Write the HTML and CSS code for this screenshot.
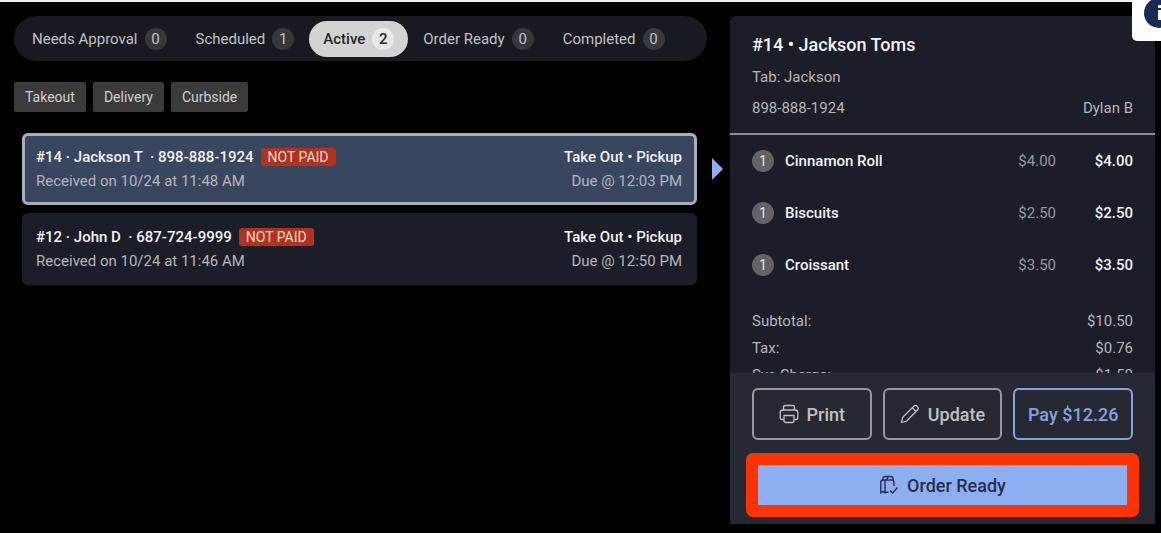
FILE: index.html
```html
<!DOCTYPE html>
<html lang="en">
<head>
    <meta charset="UTF-8" />
    <meta name="viewport" content="width=device-width, initial-scale=1.0" />
    <title>Orders</title>
    <link rel="stylesheet" href="styles.css">
</head>
<body>

    <div class="app">
        <main class="orders">
            <nav class="tabs">
                <button class="tab">Needs Approval <span class="count">0</span></button>
                <button class="tab">Scheduled <span class="count">1</span></button>
                <button class="tab active">Active <span class="count">2</span></button>
                <button class="tab">Order Ready <span class="count">0</span></button>
                <button class="tab">Completed <span class="count">0</span></button>
            </nav>

            <div class="filters">
                <button class="filter">Takeout</button>
                <button class="filter">Delivery</button>
                <button class="filter">Curbside</button>
            </div>

            <div class="order-list">
                <article class="order selected">
                    <div class="order-row">
                        <strong>#14 · Jackson T &nbsp;· 898-888-1924</strong>
                        <span class="badge">NOT PAID</span>
                        <strong class="right">Take Out • Pickup</strong>
                    </div>
                    <div class="order-row">
                        <span>Received on 10/24 at 11:48 AM</span>
                        <span class="right">Due @ 12:03 PM</span>
                    </div>
                </article>
                <article class="order">
                    <div class="order-row">
                        <strong>#12 · John D &nbsp;· 687-724-9999</strong>
                        <span class="badge">NOT PAID</span>
                        <strong class="right">Take Out • Pickup</strong>
                    </div>
                    <div class="order-row">
                        <span>Received on 10/24 at 11:46 AM</span>
                        <span class="right">Due @ 12:50 PM</span>
                    </div>
                </article>
            </div>
        </main>

        <aside class="details">
            <header class="details-header">
                <h1>#14 • Jackson Toms</h1>
                <p>Tab: Jackson</p>
                <p class="split"><span>898-888-1924</span><span>Dylan B</span></p>
            </header>

            <div class="details-body">
                <table class="items">
                    <tr>
                        <td class="qty"><span>1</span></td>
                        <td class="name">Cinnamon Roll</td>
                        <td class="price">$4.00</td>
                        <td class="total">$4.00</td>
                    </tr>
                    <tr>
                        <td class="qty"><span>1</span></td>
                        <td class="name">Biscuits</td>
                        <td class="price">$2.50</td>
                        <td class="total">$2.50</td>
                    </tr>
                    <tr>
                        <td class="qty"><span>1</span></td>
                        <td class="name">Croissant</td>
                        <td class="price">$3.50</td>
                        <td class="total">$3.50</td>
                    </tr>
                </table>
                <div class="summary">
                    <p class="split"><span>Subtotal:</span><span>$10.50</span></p>
                    <p class="split"><span>Tax:</span><span>$0.76</span></p>
                    <p class="split"><span>Svc Charge:</span><span>$1.50</span></p>
                </div>
            </div>

            <footer class="details-footer">
                <div class="actions">
                    <button class="action">
                        <svg width="20" height="20" viewBox="0 0 20 20" fill="none" stroke="currentColor" stroke-width="1.3" stroke-linejoin="round">
                            <path d="M4.500 6V3.200Q4.500 1.500 6.200 1.500h7.600q1.700 0 1.700 1.700V6" />
                            <path d="M4.500 15.500H3Q1.200 15.500 1.200 13.500V8.500Q1.200 6 3.700 6h12.600q2.500 0 2.500 2.500v5q0 2-1.800 2h-1.500" />
                            <path d="M5 11.500h10v5q0 2-2 2H7q-2 0-2-2z" />
                        </svg>
                        Print
                    </button>
                    <button class="action">
                        <svg width="20" height="20" viewBox="0 0 20 20" fill="none" stroke="currentColor" stroke-width="1.3" stroke-linejoin="round">
                            <path d="M1.500 18.500l1.300-5.300L13.900 2.100q1.900-1.300 3.400.300t.400 3.400L6.700 17z" />
                            <path d="M12.300 3.700l4 4" />
                        </svg>
                        Update
                    </button>
                    <button class="action pay">Pay $12.26</button>
                </div>
                <div class="highlight">
                    <button class="ready">
                        <svg width="20" height="20" viewBox="0 0 20 20" fill="none" stroke="currentColor" stroke-width="1.4" stroke-linejoin="round">
                            <path d="M6 5v13l-2-1.500L1.800 18V7.500Q2 5 4 5h9q2 .2 2 2.500V11" />
                            <path d="M4 5V3.500q0-2 2.200-2H12q2 0 2 2V5M8.300 5V3.500q0-1.800 1.700-2" />
                            <path d="M6 17.300h3.500M11 15.500l2.500 2.500 5-5.500" />
                        </svg>
                        Order Ready
                    </button>
                </div>
            </footer>
        </aside>
    </div>

    <button class="info" aria-label="Info">
        <svg width="30" height="28" viewBox="0 2 30 28">
            <circle cx="15" cy="15" r="15" fill="#172b55" />
            <path d="M14 7h4v3h-4zM14 12h4v10h-4z" fill="#fff" />
        </svg>
    </button>

</body>
</html>
```
FILE: styles.css
```css
* {
    box-sizing: border-box;
}

body {
    font-family: Roboto, Arial, sans-serif;
    font-size: 15px;
    line-height: 24px;
    background: #000;
    color: #b4b5ba;
    margin: 0;
    overflow: hidden;
}

button {
    font-family: inherit;
    border: none;
    cursor: pointer;
}

h1, p {
    margin: 0;
}

.app {
    display: grid;
    grid-template-columns: 1fr 425px;
    gap: 23px;
    height: 100vh;
    padding: 14px 6px 9px 14px;
    border-top: 2px solid #eef0f0;
}

.tabs {
    display: flex;
    align-items: center;
    gap: 1px;
    height: 45px;
    padding: 0 4px;
    border-radius: 23px;
    background: #181a21;
}

.tab {
    display: flex;
    align-items: center;
    gap: 7px;
    height: 36px;
    padding: 0 14px;
    border-radius: 18px;
    background: none;
    color: #c1c2c4;
    font-size: 15px;
    white-space: nowrap;
}

.count {
    width: 22px;
    border-radius: 50%;
    background: #36383b;
    line-height: 22px;
    text-align: center;
}

.tab.active {
    background: #d2d4d3;
    color: #25272b;
    font-weight: 500;
}

.tab.active .count {
    background: #e8eaea;
}

.filters {
    display: flex;
    gap: 7px;
    margin-top: 21px;
}

.filter {
    height: 30px;
    padding: 0 11px;
    border-radius: 2px;
    background: #3b3b3b;
    color: #cfcfcf;
    font-size: 14px;
}

.order-list {
    display: flex;
    flex-direction: column;
    gap: 8px;
    margin: 21px 10px 0 8px;
}

.order {
    position: relative;
    padding: 9px 12px 9px 11px;
    border: 3px solid #1b1e28;
    border-radius: 6px;
    background: #1b1e28;
}

.order.selected {
    border-color: #a9afba;
    background: #39465f;
}

/* arrow that points at the details panel */
.order.selected::after {
    content: "";
    position: absolute;
    top: 22px;
    right: -29px;
    border: solid transparent;
    border-width: 11px 0 11px 11px;
    border-left-color: #8eaef2;
}

.order-row {
    display: flex;
    align-items: center;
    gap: 7px;
}

.order-row strong {
    color: #f2f3f5;
    font-weight: 500;
}

.order-row .right {
    margin-left: auto;
}

.badge {
    padding: 0 7px;
    border-radius: 3px;
    background: #b1331c;
    color: #f3dcd6;
    font-size: 14px;
    line-height: 18px;
}

.details {
    display: flex;
    flex-direction: column;
    min-height: 0;
    border-radius: 6px 6px 0 0;
    background: #1b1e28;
    overflow: hidden;
}

.details-header {
    padding: 17px 22px 9px;
    border-bottom: 2px solid #8b8d93;
}

.details-header h1 {
    margin-bottom: 5px;
    color: #f2f3f5;
    font-size: 18px;
    font-weight: 500;
}

.details-header p {
    line-height: 31px;
}

.split {
    display: flex;
    justify-content: space-between;
}

.details-body {
    flex: 1;
    min-height: 0;
    padding: 0 22px;
    overflow: hidden;
}

.items {
    width: 100%;
    border-collapse: collapse;
}

.items td {
    height: 52px;
    padding: 0;
}

.qty {
    width: 33px;
}

.qty span {
    display: block;
    width: 22px;
    border-radius: 50%;
    background: #636363;
    color: #e4e4e4;
    font-size: 14px;
    line-height: 22px;
    text-align: center;
}

.name, .total {
    color: #f2f3f5;
    font-weight: 500;
}

.price, .total {
    width: 77px;
    text-align: right;
}

.price {
    color: #96989f;
}

.summary {
    margin-top: 17px;
}

.summary p {
    line-height: 27px;
}

.details-footer {
    padding: 15px 16px 7px;
    background: #272932;
}

.actions {
    display: grid;
    grid-template-columns: repeat(3, 1fr);
    gap: 11px;
    padding: 0 6px;
}

.action {
    display: flex;
    align-items: center;
    justify-content: center;
    gap: 8px;
    height: 52px;
    padding: 0;
    border: 2px solid #97999d;
    border-radius: 6px;
    background: none;
    color: #c0c1c3;
    font-size: 18px;
    font-weight: 500;
    white-space: nowrap;
}

.action.pay {
    border-color: #83a2e2;
    color: #83a2e2;
}

.highlight {
    margin-top: 13px;
    padding: 12px;
    border-radius: 7px;
    background: #ff3300;
}

.ready {
    display: flex;
    align-items: center;
    justify-content: center;
    gap: 8px;
    width: 100%;
    height: 40px;
    background: #8eaef2;
    color: #25304a;
    font-size: 18px;
    font-weight: 500;
}

/* help widget, partly off the right edge */
.info {
    position: absolute;
    top: 0;
    right: -20px;
    padding: 0 7px 13px 12px;
    border-radius: 0 0 0 5px;
    background: #fff;
}

.info svg {
    display: block;
}
```
